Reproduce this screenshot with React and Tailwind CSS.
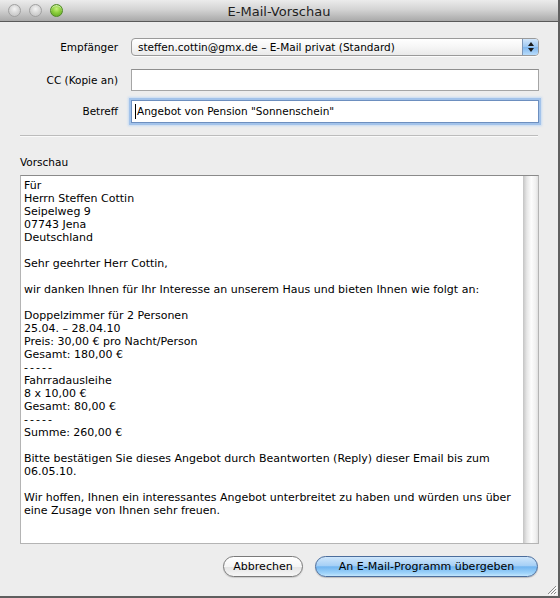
import React from "react";

const lines = [
  "Für",
  "Herrn Steffen Cottin",
  "Seipelweg 9",
  "07743 Jena",
  "Deutschland",
  "",
  "Sehr geehrter Herr Cottin,",
  "",
  "wir danken Ihnen für Ihr Interesse an unserem Haus und bieten Ihnen wie folgt an:",
  "",
  "Doppelzimmer für 2 Personen",
  "25.04. – 28.04.10",
  "Preis: 30,00 € pro Nacht/Person",
  "Gesamt: 180,00 €",
  "-----",
  "Fahrradausleihe",
  "8 x 10,00 €",
  "Gesamt: 80,00 €",
  "-----",
  "Summe: 260,00 €",
  "",
  "Bitte bestätigen Sie dieses Angebot durch Beantworten (Reply) dieser Email bis zum",
  "06.05.10.",
  "",
  "Wir hoffen, Ihnen ein interessantes Angebot unterbreitet zu haben und würden uns über",
  "eine Zusage von Ihnen sehr freuen.",
];

function Light({ green }) {
  return (
    <div
      className={
        green
          ? "w-[13px] h-[13px] rounded-full border border-[#4f8a22] bg-[radial-gradient(circle_at_50%_35%,#c8f07e_0%,#8ccf3c_45%,#5a9e20_100%)] shadow-[inset_0_1px_1px_rgba(255,255,255,0.6)]"
          : "w-[13px] h-[13px] rounded-full border border-[#a0a0a0] bg-[radial-gradient(circle_at_50%_35%,#f4f4f4_0%,#d6d6d6_50%,#bdbdbd_100%)]"
      }
    />
  );
}

export default function App() {
  return (
    <div
      className="relative w-[560px] h-[598px] box-border border-r-2 border-b-2 border-[#5f5f5f] bg-[#ededed] flex flex-col text-black"
      style={{ fontFamily: '"DejaVu Sans", sans-serif' }}
    >
      {/* Title bar */}
      <div className="relative h-[22px] shrink-0 border-b border-[#5a5a5a] bg-[linear-gradient(#ececec,#d4d4d4_45%,#a9a9a9)] flex items-center">
        <div className="flex items-center gap-[8px] pl-[8px]">
          <Light />
          <Light />
          <Light green />
        </div>
        <div className="absolute inset-0 flex items-center justify-center text-[13px] text-[#1e1e1e] leading-none pt-[1px]">
          E-Mail-Vorschau
        </div>
      </div>

      {/* Form rows */}
      <div className="flex flex-col pr-[19px]">
        <div className="flex items-center mt-[16px] h-[18px]">
          <div className="w-[118px] text-right text-[10.5px] leading-[13px]">Empfänger</div>
          <div className="ml-[13px] flex-1 h-[18px] flex rounded-[4px] border border-[#9a9a9a] overflow-hidden bg-[linear-gradient(#ffffff,#f6f6f6_50%,#eaeaea)] shadow-[0_1px_0_rgba(255,255,255,0.8)]">
            <div className="flex-1 flex items-center pl-[6px] text-[10.5px] leading-none">
              steffen.cottin@gmx.de – E-Mail privat (Standard)
            </div>
            <div className="w-[16px] border-l border-[#7d97b8] bg-[linear-gradient(#d2e6fb,#9cc7f1_50%,#7fb6ee_51%,#b8dcfb)] flex flex-col items-center justify-center gap-[2px]">
              <svg width="6" height="4" viewBox="0 0 6 4"><path d="M0 4 L3 0 L6 4 Z" fill="#1a1a1a" /></svg>
              <svg width="6" height="4" viewBox="0 0 6 4"><path d="M0 0 L3 4 L6 0 Z" fill="#1a1a1a" /></svg>
            </div>
          </div>
        </div>

        <div className="flex items-center mt-[13px] h-[22px]">
          <div className="w-[118px] text-right text-[10.5px] leading-[13px]">CC (Kopie an)</div>
          <div className="ml-[13px] flex-1 h-[22px] bg-white border border-[#a5a5a5] border-t-[#8e8e8e]" />
        </div>

        <div className="flex items-center mt-[9px] h-[23px]">
          <div className="w-[118px] text-right text-[10.5px] leading-[13px]">Betreff</div>
          <div className="ml-[13px] flex-1 h-[23px] bg-white border border-[#6d8fbf] shadow-[0_0_0_2px_#a3c3ea,0_0_2px_3px_#c6dbf3] flex items-center pl-[3px]">
            <div className="w-px h-[15px] bg-black mr-[1px]" />
            <span className="text-[10.5px] leading-none">Angebot von Pension "Sonnenschein"</span>
          </div>
        </div>
      </div>

      {/* Separator */}
      <div className="mt-[12px] mx-[20px] h-px bg-[#bcbcbc] shadow-[0_1px_0_#fafafa]" />

      {/* Vorschau label */}
      <div className="mt-[20px] pl-[20px] text-[10.5px] leading-[13px]">Vorschau</div>

      {/* Preview box */}
      <div className="mt-[6px] ml-[20px] w-[519px] h-[369px] flex bg-white border border-[#b4b4b4] border-t-[#8a8a8a]">
        <div className="flex-1 pt-[3px] pl-[3px] text-[11px] leading-[13px] whitespace-pre overflow-hidden">
          {lines.map((l, i) => (
            <div key={i} className={l === "-----" ? "h-[13px] tracking-[2px]" : "h-[13px]"}>{l}</div>
          ))}
        </div>
        <div className="w-[15px] bg-[linear-gradient(90deg,#c4c4c4,#e6e6e6_25%,#fdfdfd_55%,#f0f0f0_85%,#e0e0e0)]" />
      </div>

      {/* Buttons */}
      <div className="mt-[12px] flex justify-end gap-[12px] pr-[20px]">
        <button className="w-[80px] h-[21px] rounded-full border border-[#7a7a7a] bg-[linear-gradient(#ffffff,#f5f5f5_50%,#e4e4e4_51%,#f6f6f6)] text-[11px] leading-none text-black shadow-[0_1px_1px_rgba(0,0,0,0.15)]">
          Abbrechen
        </button>
        <button className="w-[223px] h-[21px] rounded-full border border-[#4b6d9c] bg-[linear-gradient(#cfe6fb,#a6d0f6_45%,#72b5f0_52%,#9ed3fa_85%,#c3e6fd)] text-[11px] leading-none text-black shadow-[0_1px_1px_rgba(0,0,0,0.2)]">
          An E-Mail-Programm übergeben
        </button>
      </div>

      {/* Resize grip */}
      <svg className="absolute right-[1px] bottom-[1px]" width="12" height="12" viewBox="0 0 12 12">
        <path d="M11 3 L3 11 M11 6 L6 11 M11 9 L9 11" stroke="#8a8a8a" strokeWidth="1" />
        <path d="M12 4 L4 12 M12 7 L7 12 M12 10 L10 12" stroke="#ffffff" strokeWidth="1" />
      </svg>
    </div>
  );
}
